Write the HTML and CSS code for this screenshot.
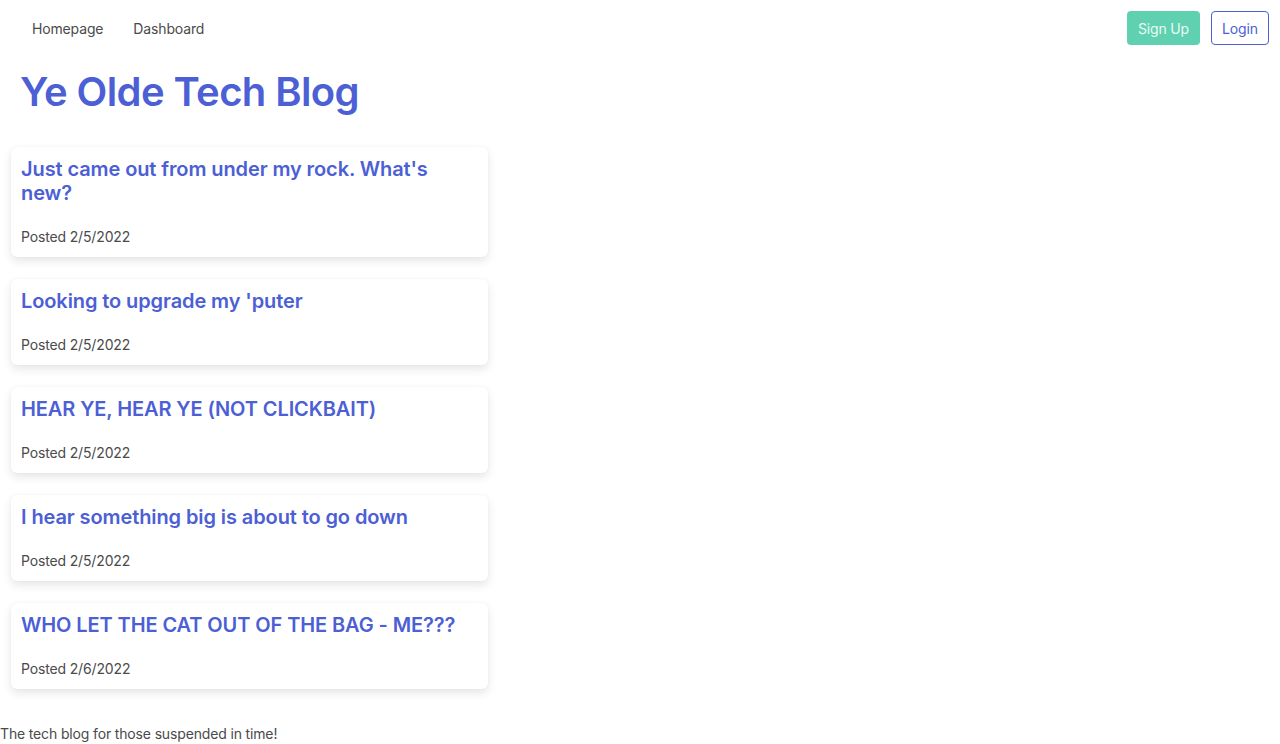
FILE: index.html
```html
<!DOCTYPE html>
<html lang="en">
<head>
<meta charset="utf-8">
<title>Ye Olde Tech Blog</title>
<link rel="stylesheet" href="styles.css">
</head>
<body>
<header class="topbar">
  <nav class="nav">
    <a class="nav-link" href="#">Homepage</a>
    <a class="nav-link" href="#">Dashboard</a>
  </nav>
  <div class="auth">
    <a class="btn btn-signup" href="#">Sign Up</a>
    <a class="btn btn-login" href="#">Login</a>
  </div>
</header>
<h1 class="site-title">Ye Olde Tech Blog</h1>
<main class="posts">
  <article class="card">
    <h2 class="card-title">Just came out from under my rock. What's new?</h2>
    <p class="card-date">Posted 2/5/2022</p>
  </article>
  <article class="card">
    <h2 class="card-title">Looking to upgrade my 'puter</h2>
    <p class="card-date">Posted 2/5/2022</p>
  </article>
  <article class="card">
    <h2 class="card-title">HEAR YE, HEAR YE (NOT CLICKBAIT)</h2>
    <p class="card-date">Posted 2/5/2022</p>
  </article>
  <article class="card">
    <h2 class="card-title">I hear something big is about to go down</h2>
    <p class="card-date">Posted 2/5/2022</p>
  </article>
  <article class="card">
    <h2 class="card-title">WHO LET THE CAT OUT OF THE BAG - ME???</h2>
    <p class="card-date">Posted 2/6/2022</p>
  </article>
</main>
<footer class="footer">The tech blog for those suspended in time!</footer>
</body>
</html>
```

FILE: styles.css
```css
* { box-sizing: border-box; }
html, body { margin: 0; padding: 0; }
body {
  font-family: Inter, "Noto Sans", sans-serif;
  color: #4a4a4a;
  background: #fff;
  font-size: 14px;
  letter-spacing: -0.15px;
}
a { text-decoration: none; }

.topbar {
  display: flex;
  justify-content: space-between;
  align-items: center;
  height: 56px;
  padding: 1px 11px 0 20px;
}
.nav { display: flex; }
.nav-link {
  color: #4a4a4a;
  font-size: 14px;
  padding: 8px 12px;
  line-height: 22px;
}
.nav-link + .nav-link { margin-left: 6px; }

.auth { display: flex; gap: 11px; flex-shrink: 0; margin-top: -1px; }
.btn {
  display: inline-flex;
  align-items: center;
  justify-content: center;
  height: 34px;
  padding: 0 10px;
  border-radius: 4px;
  font-size: 14px;
  white-space: nowrap;
  border: 1px solid transparent;
}
.btn-signup { background: #5fd1b0; color: #eafaf5; min-width: 72px; }
.btn-login { border-color: #4c5fd5; color: #4c5fd5; background: #fff; min-width: 58px; }

.site-title {
  margin: 12px 0 0 20px;
  font-size: 40px;
  font-weight: 600;
  line-height: 48px;
  color: #4c5fd5;
  letter-spacing: -0.6px;
}

.posts {
  display: flex;
  flex-direction: column;
  gap: 22px;
  width: 477px;
  margin: 31px 0 0 11px;
}
.card {
  background: #fff;
  border-radius: 6px;
  box-shadow: 0 4px 10px rgba(0,0,0,0.10), 0 0 2px rgba(0,0,0,0.05);
  padding: 10px 10px 10px 10px;
}
.card-title {
  margin: 0;
  font-size: 20px;
  font-weight: 600;
  line-height: 24px;
  color: #4c5fd5;
  letter-spacing: -0.1px;
}
.card-date {
  margin: 22px 0 0 0;
  font-size: 14px;
  line-height: 20px;
  color: #4a4a4a;
}

.footer {
  margin-top: 35px;
  font-size: 14px;
  line-height: 20px;
  color: #4a4a4a;
}
```
